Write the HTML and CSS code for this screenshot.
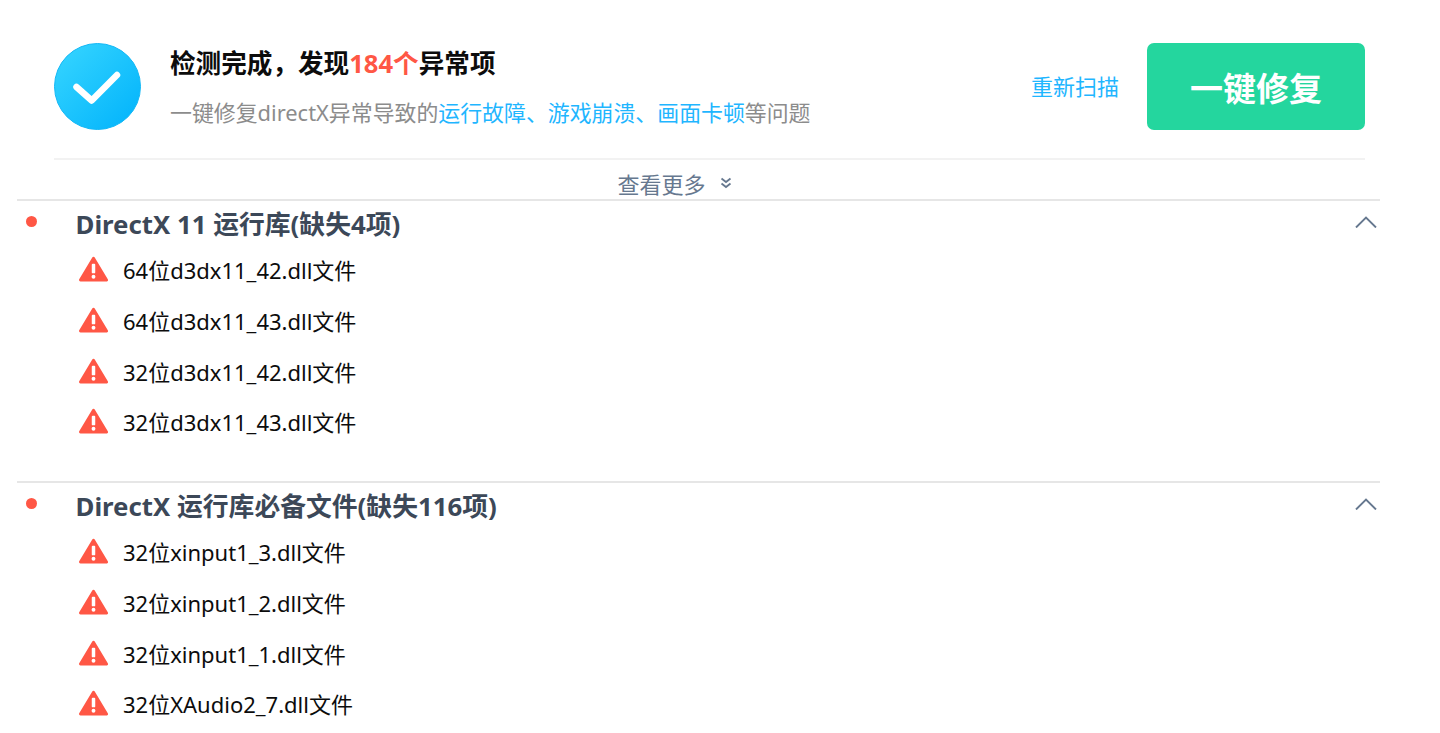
FILE: index.html
```html
<!DOCTYPE html>
<html lang="en">
<head>
    <meta charset="UTF-8">
    <meta name="viewport" content="width=device-width, initial-scale=1.0">
    <title>DirectX 检测结果</title>
    <link rel="stylesheet" href="styles.css">
</head>
<body>
    <!-- Scan summary -->
    <div class="summary">
        <svg class="status-icon" viewBox="0 0 87 87">
            <defs>
                <linearGradient id="statusFill" x1="0" y1="0" x2="1" y2="1">
                    <stop offset="0" stop-color="#38d6ff"/>
                    <stop offset="1" stop-color="#00b2fb"/>
                </linearGradient>
            </defs>
            <circle cx="43.5" cy="43.5" r="43" fill="url(#statusFill)" stroke="#14b8f6" stroke-width="1"/>
            <path d="M22.5 44 L37.7 57.5 L63 32" fill="none" stroke="#fff" stroke-width="6.5" stroke-linecap="round" stroke-linejoin="round"/>
        </svg>
        <div class="summary-text">
            <h1>检测完成，发现<span class="count">184个</span>异常项</h1>
            <p>一键修复directX异常导致的<span class="blue">运行故障、游戏崩溃、画面卡顿</span>等问题</p>
        </div>
        <a class="rescan" href="#">重新扫描</a>
        <button class="fix-button">一键修复</button>
    </div>

    <!-- Expand link -->
    <div class="more">
        <span>查看更多</span>
        <svg class="more-icon" viewBox="0 0 12 12">
            <path d="M1.5 1.5 L6 5 L10.5 1.5 M1.5 6.5 L6 10 L10.5 6.5" fill="none" stroke="#66788f" stroke-width="1.8"/>
        </svg>
    </div>

    <!-- DirectX 11 group -->
    <div class="group">
        <div class="group-head">
            <span class="dot"></span>
            <h2>DirectX 11 运行库(缺失4项)</h2>
            <svg class="chevron" viewBox="0 0 22 12">
                <path d="M1 11.5 L11 1.5 L21 11.5" fill="none" stroke="#66788f" stroke-width="1.9"/>
            </svg>
        </div>
        <ul class="files">
            <li><svg class="warn" viewBox="0 0 30 26"><path d="M15 2 L28.5 24.5 H1.5 Z" fill="#ff5745" stroke="#ff5745" stroke-width="3" stroke-linejoin="round"/><rect x="13.2" y="7.5" width="3.6" height="10" rx="1" fill="#fff"/><circle cx="15" cy="21" r="2" fill="#fff"/></svg>64位d3dx11_42.dll文件</li>
            <li><svg class="warn" viewBox="0 0 30 26"><path d="M15 2 L28.5 24.5 H1.5 Z" fill="#ff5745" stroke="#ff5745" stroke-width="3" stroke-linejoin="round"/><rect x="13.2" y="7.5" width="3.6" height="10" rx="1" fill="#fff"/><circle cx="15" cy="21" r="2" fill="#fff"/></svg>64位d3dx11_43.dll文件</li>
            <li><svg class="warn" viewBox="0 0 30 26"><path d="M15 2 L28.5 24.5 H1.5 Z" fill="#ff5745" stroke="#ff5745" stroke-width="3" stroke-linejoin="round"/><rect x="13.2" y="7.5" width="3.6" height="10" rx="1" fill="#fff"/><circle cx="15" cy="21" r="2" fill="#fff"/></svg>32位d3dx11_42.dll文件</li>
            <li><svg class="warn" viewBox="0 0 30 26"><path d="M15 2 L28.5 24.5 H1.5 Z" fill="#ff5745" stroke="#ff5745" stroke-width="3" stroke-linejoin="round"/><rect x="13.2" y="7.5" width="3.6" height="10" rx="1" fill="#fff"/><circle cx="15" cy="21" r="2" fill="#fff"/></svg>32位d3dx11_43.dll文件</li>
        </ul>
    </div>

    <!-- Required files group -->
    <div class="group">
        <div class="group-head">
            <span class="dot"></span>
            <h2>DirectX 运行库必备文件(缺失116项)</h2>
            <svg class="chevron" viewBox="0 0 22 12">
                <path d="M1 11.5 L11 1.5 L21 11.5" fill="none" stroke="#66788f" stroke-width="1.9"/>
            </svg>
        </div>
        <ul class="files">
            <li><svg class="warn" viewBox="0 0 30 26"><path d="M15 2 L28.5 24.5 H1.5 Z" fill="#ff5745" stroke="#ff5745" stroke-width="3" stroke-linejoin="round"/><rect x="13.2" y="7.5" width="3.6" height="10" rx="1" fill="#fff"/><circle cx="15" cy="21" r="2" fill="#fff"/></svg>32位xinput1_3.dll文件</li>
            <li><svg class="warn" viewBox="0 0 30 26"><path d="M15 2 L28.5 24.5 H1.5 Z" fill="#ff5745" stroke="#ff5745" stroke-width="3" stroke-linejoin="round"/><rect x="13.2" y="7.5" width="3.6" height="10" rx="1" fill="#fff"/><circle cx="15" cy="21" r="2" fill="#fff"/></svg>32位xinput1_2.dll文件</li>
            <li><svg class="warn" viewBox="0 0 30 26"><path d="M15 2 L28.5 24.5 H1.5 Z" fill="#ff5745" stroke="#ff5745" stroke-width="3" stroke-linejoin="round"/><rect x="13.2" y="7.5" width="3.6" height="10" rx="1" fill="#fff"/><circle cx="15" cy="21" r="2" fill="#fff"/></svg>32位xinput1_1.dll文件</li>
            <li><svg class="warn" viewBox="0 0 30 26"><path d="M15 2 L28.5 24.5 H1.5 Z" fill="#ff5745" stroke="#ff5745" stroke-width="3" stroke-linejoin="round"/><rect x="13.2" y="7.5" width="3.6" height="10" rx="1" fill="#fff"/><circle cx="15" cy="21" r="2" fill="#fff"/></svg>32位XAudio2_7.dll文件</li>
        </ul>
    </div>
</body>
</html>
```
FILE: styles.css
```css
/* Base styles */
html, body {
    height: 733px;
    overflow: hidden;
}

body {
    font-family: "Noto Sans", "Noto Sans CJK SC", sans-serif;
    margin: 0;
    padding: 0 60px 0 17px;
    background-color: #fff;
}

/* Scan summary */
.summary {
    display: flex;
    align-items: center;
    height: 87px;
    margin: 0 15px 0 37px;
    padding: 43px 0 28px;
    border-bottom: 2px solid #f2f2f2;
}

.status-icon {
    width: 87px;
    height: 87px;
    flex-shrink: 0;
}

.summary-text {
    flex: 1;
    margin-left: 29px;
}

.summary-text h1 {
    margin: 1px 0 0;
    font-size: 25.6px;
    line-height: 44px;
    font-weight: 700;
    color: #0c0c0c;
}

.summary-text p {
    margin: 7px 0 0;
    font-size: 21.9px;
    line-height: 40px;
    color: #8c8c8c;
}

.count {
    color: #ff5745;
}

.blue {
    color: #1fb6ff;
}

.rescan {
    margin-top: -4px;
    font-size: 22px;
    color: #1fb6ff;
    text-decoration: none;
}

.fix-button {
    width: 218px;
    height: 87px;
    margin-left: 28px;
    border: none;
    border-radius: 7px;
    background-color: #24d69e;
    color: #fff;
    font-family: inherit;
    font-size: 33px;
    font-weight: 700;
    padding: 0;
}

/* Expand link */
.more {
    display: flex;
    justify-content: center;
    align-items: center;
    gap: 14px;
    height: 39px;
    padding: 7px 48px 0 0;
    box-sizing: border-box;
    font-size: 22px;
    color: #66788f;
}

.more-icon {
    width: 12px;
    height: 12px;
}

/* Groups of missing files */
.group {
    height: 280px;
    border-top: 2px solid #e6e6e6;
}

.group-head {
    display: flex;
    align-items: center;
    height: 43px;
}

.dot {
    width: 11px;
    height: 11px;
    margin: -2px 0 0 9px;
    border-radius: 50%;
    background-color: #ff5745;
}

.group-head h2 {
    flex: 1;
    margin: 0 0 0 38.5px;
    font-size: 25.8px;
    font-weight: 700;
    color: #3c4858;
}

.chevron {
    width: 22px;
    height: 12px;
    margin: -1px 3px 0 0;
}

.files {
    list-style: none;
    margin: 0;
    padding: 0 0 0 62px;
}

.files li {
    display: flex;
    align-items: center;
    height: 50.7px;
    font-size: 22px;
    color: #0c0c0c;
}

.warn {
    width: 29px;
    height: 26px;
    margin-right: 15px;
    flex-shrink: 0;
}
```
